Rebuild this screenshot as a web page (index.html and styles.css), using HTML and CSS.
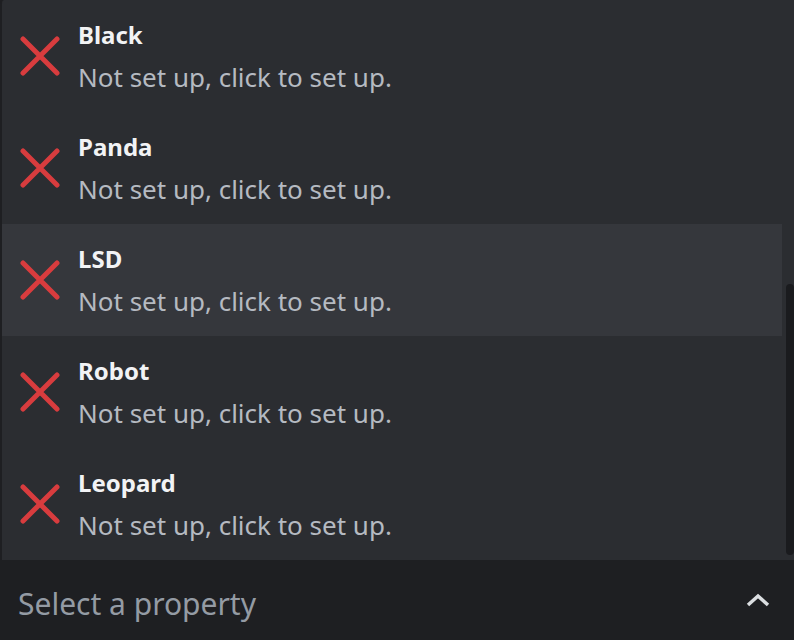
FILE: index.html
```html
<!DOCTYPE html>
<html>
<head>
<meta charset="utf-8">
<link rel="stylesheet" href="styles.css">
</head>
<body>
<div class="popout">
  <div class="list">
    <div class="option">
      <svg class="x" viewBox="0 0 40 40"><path d="M3 3L37 37M37 3L3 37"/></svg>
      <div class="text"><div class="title">Black</div><div class="sub">Not set up, click to set up.</div></div>
    </div>
    <div class="option">
      <svg class="x" viewBox="0 0 40 40"><path d="M3 3L37 37M37 3L3 37"/></svg>
      <div class="text"><div class="title">Panda</div><div class="sub">Not set up, click to set up.</div></div>
    </div>
    <div class="option hover">
      <svg class="x" viewBox="0 0 40 40"><path d="M3 3L37 37M37 3L3 37"/></svg>
      <div class="text"><div class="title">LSD</div><div class="sub">Not set up, click to set up.</div></div>
    </div>
    <div class="option">
      <svg class="x" viewBox="0 0 40 40"><path d="M3 3L37 37M37 3L3 37"/></svg>
      <div class="text"><div class="title">Robot</div><div class="sub">Not set up, click to set up.</div></div>
    </div>
    <div class="option">
      <svg class="x" viewBox="0 0 40 40"><path d="M3 3L37 37M37 3L3 37"/></svg>
      <div class="text"><div class="title">Leopard</div><div class="sub">Not set up, click to set up.</div></div>
    </div>
    <div class="thumb"></div>
  </div>
  <div class="select">
    <span class="placeholder">Select a property</span>
    <svg class="chev" viewBox="0 0 24 14"><path d="M2 12L12 3L22 12"/></svg>
  </div>
</div>
</body>
</html>
```
FILE: styles.css
```css
html, body {
  margin: 0;
  padding: 0;
  background: #1e1f22;
}
body {
  width: 794px;
  height: 640px;
  overflow: hidden;
  font-family: "Noto Sans", "Open Sans", sans-serif;
}
.popout {
  display: flex;
  flex-direction: column;
  height: 640px;
}
.list {
  position: relative;
  height: 560px;
  background: #2b2d31;
  border-left: 2px solid #1e1f22;
  border-top-left-radius: 4px;
  padding-right: 12px;
  box-sizing: border-box;
}
.option {
  height: 112px;
  display: flex;
  align-items: center;
  padding-left: 18px;
  gap: 18px;
  box-sizing: border-box;
}
.option.hover {
  background: #35373c;
}
.x {
  width: 40px;
  height: 40px;
  flex: none;
}
.x path {
  stroke: #d83c3e;
  stroke-width: 5;
  stroke-linecap: round;
  fill: none;
}
.text {
  display: flex;
  flex-direction: column;
  gap: 11px;
}
.title {
  color: #f2f3f5;
  font-size: 24px;
  font-weight: 700;
  line-height: 30px;
}
.sub {
  color: #b5bac1;
  font-size: 26px;
  line-height: 32px;
}
.thumb {
  position: absolute;
  right: 0;
  top: 284px;
  width: 8px;
  height: 271px;
  border-radius: 4px;
  background: #1a1b1e;
}
.select {
  height: 80px;
  background: #1e1f22;
  display: flex;
  align-items: center;
  justify-content: space-between;
  padding: 0 24px 0 18px;
}
.placeholder {
  color: #949ba4;
  font-size: 30px;
  line-height: 36px;
  margin-top: 8px;
}
.chev {
  width: 24px;
  height: 14px;
}
.chev path {
  stroke: #dbdee1;
  stroke-width: 3.5;
  fill: none;
}
```
